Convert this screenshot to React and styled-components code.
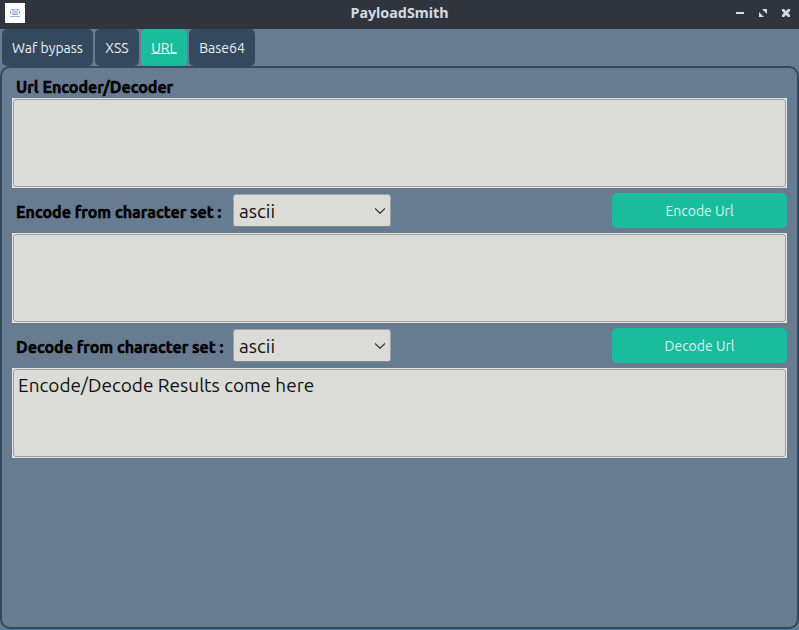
import React from "react";
import styled, { createGlobalStyle } from "styled-components";

const GlobalStyle = createGlobalStyle`
  * { box-sizing: border-box; }
  body {
    margin: 0;
    overflow: hidden;
    background: #687c91;
    font-family: Ubuntu, "Noto Sans", sans-serif;
  }
`;

const Window = styled.div`
  width: 799px;
  height: 630px;
  display: flex;
  flex-direction: column;
  background: #687c91;
  border-bottom: 1px solid #5578ab;
`;

const TitleBar = styled.header`
  height: 29px;
  flex: none;
  display: grid;
  grid-template-columns: 1fr auto 1fr;
  align-items: center;
  padding: 0 8px 3px 5px;
  background: #2f343f;
`;

const AppIcon = styled.svg`
  width: 20px;
  height: 20px;
  display: block;
`;

const Title = styled.h1`
  margin: 0;
  padding-left: 3px;
  color: #d3dae3;
  font: bold 14.3px/20px "Noto Sans", sans-serif;
`;

const Controls = styled.div`
  display: flex;
  justify-content: flex-end;
`;

const ControlIcon = styled.svg`
  width: 10px;
  height: 10px;
  margin-left: 13px;
  fill: #d3dae3;
`;

const Tabs = styled.nav`
  display: flex;
  gap: 2px;
  height: 37px;
  flex: none;
  padding-left: 2px;
`;

const Tab = styled.button`
  width: ${(p) => p.$width}px;
  height: 37px;
  padding: 1px 0 0;
  border: 0;
  border-radius: 5px;
  background: ${(p) => (p.$active ? "#1abc9c" : "#34495e")};
  color: #ecf0f1;
  font: 14px/20px Ubuntu, "Noto Sans", sans-serif;
  white-space: nowrap;
`;

const Mnemonic = styled.span`
  text-decoration: underline;
  text-decoration-thickness: 1px;
  text-underline-offset: 0;
  text-decoration-skip-ink: none;
`;

const Panel = styled.main`
  flex: 1;
  padding: 8px 10px 0;
  border: 2px solid #34495e;
  border-radius: 10px;
`;

const Label = styled.label`
  display: block;
  padding-left: 4px;
  color: #000;
  font: bold 16px/22px Ubuntu, "Noto Sans", sans-serif;
  -webkit-text-stroke: 0.5px #000;
  white-space: nowrap;
`;

const RowLabel = styled(Label)`
  width: 221px;
  padding-top: 2px;
`;

const Field = styled.div`
  height: 90px;
  padding: 1px;
  background: #e2e3df;
`;

const TextBox = styled.textarea`
  display: block;
  width: 100%;
  height: 100%;
  padding: 1px 4px;
  border: 1px solid #9fa19d;
  border-radius: 3px;
  outline: 0;
  resize: none;
  background: #dbdcd7;
  color: #111;
  font: 19px/28px Ubuntu, "Noto Sans", sans-serif;
`;

const Row = styled.div`
  height: 45px;
  display: flex;
  align-items: center;
`;

const Select = styled.div`
  width: 158px;
  height: 33px;
  display: flex;
  align-items: center;
  justify-content: space-between;
  padding: 0 5px;
  border: 1px solid #a0a5a7;
  border-bottom-color: #83898e;
  border-radius: 3px;
  background: #dbdcd7;
  color: #111;
  font: 19px/28px Ubuntu, "Noto Sans", sans-serif;
`;

const Chevron = styled.svg`
  width: 10px;
  height: 6px;
  fill: none;
  stroke: #30363a;
  stroke-width: 1.2;
`;

const Action = styled.button`
  width: 175px;
  height: 35px;
  margin-left: auto;
  padding: 0;
  border: 0;
  border-radius: 5px;
  background: #1abc9c;
  color: #d9f5ef;
  font: 14px/20px Ubuntu, "Noto Sans", sans-serif;
`;

function CharsetRow({ label, action }) {
  return (
    <Row>
      <RowLabel>{label}</RowLabel>
      <Select role="combobox">
        ascii
        <Chevron viewBox="0 0 10 6"><path d="M0 .5 5 5.3 10 .5" /></Chevron>
      </Select>
      <Action>{action}</Action>
    </Row>
  );
}

export default function App() {
  return (
    <>
      <GlobalStyle />
      <Window>
        <TitleBar>
          <AppIcon viewBox="0 0 20 20">
            <path fill="#fff" d="M0 0h20v20H0z" />
            <path fill="#b5d1f3" d="M7 6h6v6H7z" />
            <path fill="none" stroke="#9aaac6" d="M6 6.5h2m4 0h2M5.5 8v3m9-3v3M7 11.5h6" />
            <path fill="#a3b2c5" d="M5 13h10v1H5z" />
          </AppIcon>
          <Title>PayloadSmith</Title>
          <Controls>
            <ControlIcon viewBox="0 0 10 10"><path d="M1 4h8v2H1z" /></ControlIcon>
            <ControlIcon viewBox="0 0 10 10"><path d="M4 1h5v5zM1 4v5h5z" /></ControlIcon>
            <ControlIcon viewBox="0 0 10 10"><path d="M1 1h2l2 2 2-2h2v2L7 5l2 2v2H7L5 7 3 9H1V7l2-2-2-2z" /></ControlIcon>
          </Controls>
        </TitleBar>
        <Tabs>
          <Tab $width={91}>Waf bypass</Tab>
          <Tab $width={44}>XSS</Tab>
          <Tab $width={46} $active><Mnemonic>URL</Mnemonic></Tab>
          <Tab $width={66}>Base64</Tab>
        </Tabs>
        <Panel>
          <Label>Url Encoder/Decoder</Label>
          <Field><TextBox /></Field>
          <CharsetRow label="Encode from character set :" action="Encode Url" />
          <Field><TextBox /></Field>
          <CharsetRow label="Decode from character set :" action="Decode Url" />
          <Field><TextBox defaultValue="Encode/Decode Results come here" /></Field>
        </Panel>
      </Window>
    </>
  );
}
